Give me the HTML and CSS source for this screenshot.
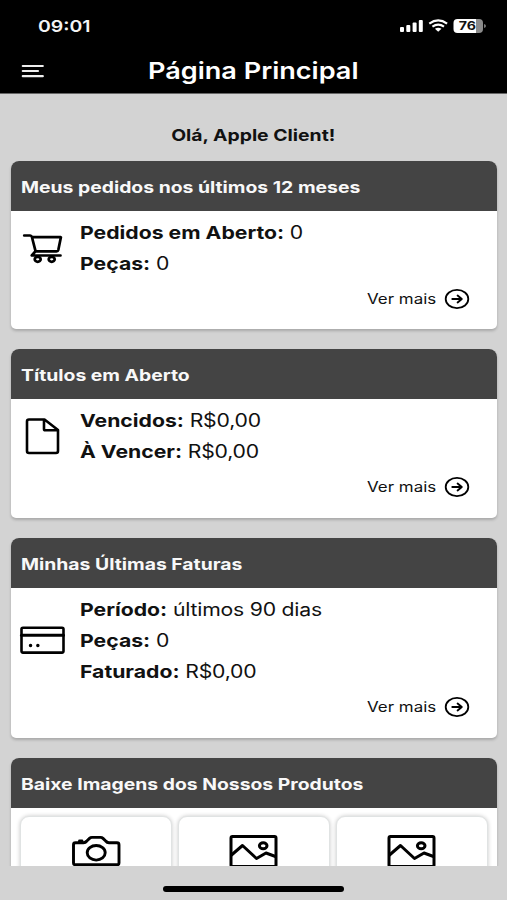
FILE: index.html
```html
<!DOCTYPE html>
<html lang="pt-BR">
<head>
<meta charset="utf-8">
<title>Página Principal</title>
<link rel="stylesheet" href="styles.css">
</head>
<body>
<svg class="defs" aria-hidden="true">
  <symbol id="go" viewBox="0 0 26 22"><ellipse cx="13" cy="11" rx="11.3" ry="9.100" stroke-width="1.800"/><path d="M8.300 11h9.300M13.600 7.500l4.200 3.500-4.200 3.500" stroke-width="1.900"/></symbol>
  <symbol id="image" viewBox="0 0 50 42"><rect x="2" y="2.500" width="45" height="30" rx="1.500" stroke-width="3"/><path d="M2.500 21L13.500 11.500 27.500 24.500 37 19 46.500 22.500" stroke-width="3"/><ellipse cx="34.200" cy="11.700" rx="3.800" ry="3" stroke-width="3"/></symbol>
</svg>
<div class="phone">
  <header class="top">
    <div class="status">
      <span class="t time">09:01</span>
      <svg class="signals" width="88" height="18" viewBox="398 17 88 18">
        <g fill="#fff"><rect x="400" y="27" width="4" height="5" rx="1"/><rect x="406.300" y="25" width="4" height="7" rx="1"/><rect x="412.600" y="22.500" width="4" height="9.500" rx="1"/><rect x="418.800" y="20" width="4" height="12" rx="1"/></g>
        <g fill="none" stroke="#fff" stroke-width="2.200"><path d="M429.300 23.600Q438.200 17.300 447.100 23.600"/><path d="M432.400 26.600Q438.200 22.700 444 26.600"/></g>
        <path d="M434.900 28.700Q438.200 26.700 441.500 28.700L438.200 31.800Z" fill="#fff"/>
        <path d="M457.500 19H476V33H457.500Q453.500 33 453.500 29V23Q453.500 19 457.500 19Z" fill="#fff"/>
        <path d="M476 19H479Q483 19 483 23V29Q483 33 479 33H476Z" fill="#8b8b8b"/>
        <path d="M484 24Q486 24.500 486 26T484 28Z" fill="#777"/>
        <text class="level" transform="translate(458.700 30.300) scale(1.180 1)">76</text>
      </svg>
    </div>
    <div class="nav">
      <svg width="24" height="16" viewBox="0 0 24 16" fill="none" stroke="#eee" stroke-width="2.200" stroke-linecap="round"><path d="M2.800 3H22.800M2.800 8H18M2.800 13.200H22.800"/></svg>
      <h1 class="t">Página Principal</h1>
    </div>
  </header>
  <main class="scroll">
    <p class="hello"><span class="t">Olá, Apple Client!</span></p>
    <section class="card">
      <h2><span class="t">Meus pedidos nos últimos 12 meses</span></h2>
      <div class="body">
        <div class="info">
          <svg class="icon" width="46" height="36" viewBox="19 230 46 36" stroke-width="2.700"><path d="M24.200 235.500H30.200Q31.500 235.500 31.900 237L35.600 251.300H56.500Q58 251.300 58.300 250L60.900 237.200H32M35.300 251.500L31.800 255.500H60.500"/><ellipse cx="37.700" cy="259.300" rx="3" ry="2.500"/><ellipse cx="51.700" cy="259.300" rx="3" ry="2.500"/></svg>
          <div class="rows"><p><span class="t"><b>Pedidos em Aberto:</b> 0</span></p><p><span class="t"><b>Peças:</b> 0</span></p></div>
        </div>
        <a class="more"><span class="t">Ver mais</span><svg width="26" height="22"><use href="#go"/></svg></a>
      </div>
    </section>
    <section class="card">
      <h2><span class="t">Títulos em Aberto</span></h2>
      <div class="body">
        <div class="info">
          <svg class="icon" width="46" height="40" viewBox="19 416 46 40" stroke-width="2.600"><path d="M29 419.500H44.500L58 430V451Q58 453 56 453H29Q27 453 27 451V421.500Q27 419.500 29 419.500ZM44 419.500V429Q44 430.300 45.300 430.300H57.500"/></svg>
          <div class="rows"><p><span class="t"><b>Vencidos:</b> R$0,00</span></p><p><span class="t"><b>À Vencer:</b> R$0,00</span></p></div>
        </div>
        <a class="more"><span class="t">Ver mais</span><svg width="26" height="22"><use href="#go"/></svg></a>
      </div>
    </section>
    <section class="card">
      <h2><span class="t">Minhas Últimas Faturas</span></h2>
      <div class="body">
        <div class="info">
          <svg class="icon" width="46" height="30" viewBox="19 625.500 46 30" stroke-width="2.600"><rect x="21.500" y="628.300" width="42" height="24.800" rx="1.500"/><path d="M21.500 635.800H63.500" stroke-width="3"/><path d="M30.500 646h.1M37.800 646h.1" stroke-width="3.400"/></svg>
          <div class="rows"><p><span class="t"><b>Período:</b> últimos 90 dias</span></p><p><span class="t"><b>Peças:</b> 0</span></p><p><span class="t"><b>Faturado:</b> R$0,00</span></p></div>
        </div>
        <a class="more"><span class="t">Ver mais</span><svg width="26" height="22"><use href="#go"/></svg></a>
      </div>
    </section>
    <section class="card">
      <h2><span class="t">Baixe Imagens dos Nossos Produtos</span></h2>
      <div class="tiles">
        <div class="tile"><svg width="50" height="42" viewBox="71 834 50 42" stroke-width="2.900"><path d="M75.500 842.700H83.500Q85.500 842.700 86.800 841L89.500 838.400Q90.500 837.400 92 837.400H100.500Q102 837.400 103 838.400L105.700 841Q107 842.700 109 842.700H117Q119 842.700 119 844.700V863Q119 864.800 117 864.800H75.500Q73.500 864.800 73.500 863V844.700Q73.500 842.700 75.500 842.700ZM79.500 841H82"/><ellipse cx="96.200" cy="852.800" rx="9" ry="7.300"/></svg></div>
        <div class="tile"><svg width="50" height="42"><use href="#image"/></svg></div>
        <div class="tile"><svg width="50" height="42"><use href="#image"/></svg></div>
      </div>
    </section>
  </main>
  <footer class="home"><i></i></footer>
</div>
</body>
</html>
```
FILE: styles.css
```css
* { box-sizing: border-box; margin: 0; padding: 0; }
body { width: 507px; height: 900px; overflow: hidden; background: #d3d3d3; font-family: Inter, "Liberation Sans", sans-serif; color: #111; }
svg { display: block; flex: none; }
.defs { display: none; }
.phone { display: flex; flex-direction: column; height: 900px; }
.t { display: inline-block; white-space: nowrap; transform: scaleX(1.209); transform-origin: left center; }
.top { height: 94px; background: #000; color: #fff; border-bottom: 1px solid #666; }
.status { display: flex; height: 50px; padding: 2px 21px 0 38px; align-items: center; justify-content: space-between; }
.time { font-size: 16.500px; font-weight: 600; line-height: 20px; color: #f4f4f4; transform: scaleX(1.18); }
.level { font-family: Inter, sans-serif; font-size: 12px; font-weight: 700; fill: #111; }
.nav { display: flex; height: 42px; align-items: center; padding-left: 20px; }
.nav h1 { margin-left: 104px; font-size: 23px; font-weight: 600; line-height: 28px; transform: scaleX(1.177); }
.scroll { flex: none; height: 772px; padding: 0 10px 0 11px; overflow: hidden; }
.hello { height: 66.800px; padding-top: 31px; text-align: center; font-size: 16px; font-weight: 700; line-height: 20px; }
.hello .t { transform-origin: center; transform: translateX(-.6px) scaleX(1.21); }
.card { margin-bottom: 20.300px; background: #fff; border-radius: 8px 8px 5px 5px; box-shadow: 0 2px 3px rgba(0, 0, 0, .2); }
.card h2 { height: 49.800px; padding: 0 10px; background: #444; color: #f8f8f8; border-radius: 8px 8px 0 0; font-size: 16px; font-weight: 700; line-height: 52px; }
.body { padding: 6px 27px 19.600px 8px; }
.info { display: flex; gap: 15px; align-items: center; }
.icon { fill: none; stroke: #000; stroke-linecap: round; stroke-linejoin: round; }
.rows { font-size: 18px; line-height: 31px; letter-spacing: -.18px; }
.rows p { height: 31px; }
.rows .t { transform: scaleX(1.178); }
.rows b { font-weight: 700; letter-spacing: 0; }
.more { display: flex; justify-content: flex-end; align-items: center; height: 22px; margin-top: 9px; gap: 20px; font-size: 14px; line-height: 20px; }
.more svg, .tile svg { fill: none; stroke: #000; stroke-linecap: round; stroke-linejoin: round; }
.tiles { display: grid; grid-template-columns: repeat(3, 1fr); gap: 5.500px; padding: 8.500px 9px; }
.tile { height: 110px; padding-top: 17px; border: 1px solid #e0e3e3; border-radius: 9px; box-shadow: 0 0 4px rgba(0, 0, 0, .22); background: #fff; }
.tile svg { margin: 0 auto; }
.home { display: flex; flex: 1; justify-content: center; padding-top: 20px; background: #d3d3d3; }
.home i { width: 181px; height: 6px; border-radius: 3px; background: #000; }
```
